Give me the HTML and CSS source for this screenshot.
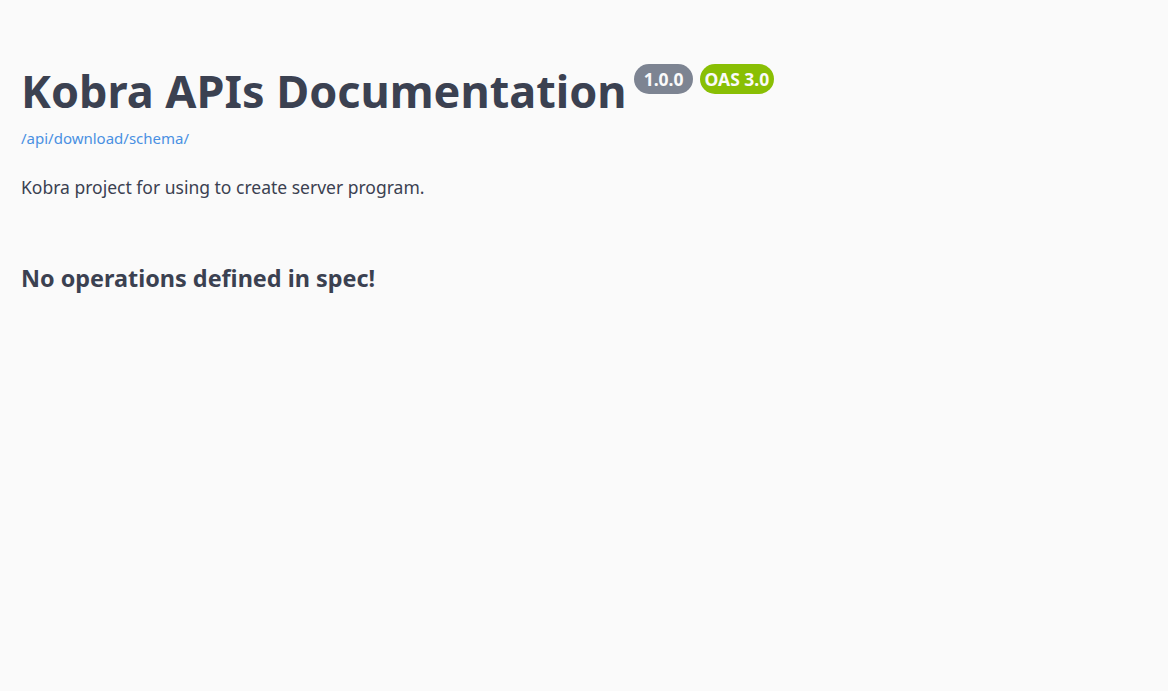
FILE: index.html
```html
<!DOCTYPE html>
<html lang="en">
<head>
<meta charset="utf-8">
<title>Kobra APIs Documentation</title>
<link rel="stylesheet" href="styles.css">
</head>
<body>
<div class="swagger-ui">
  <div class="wrapper">
    <section class="info">
      <hgroup class="main">
        <h2 class="title"><span class="title-text">Kobra APIs Documentation</span><small class="stamp version-stamp"><pre class="version"> 1.0.0 </pre></small><small class="stamp oas-stamp"><pre class="version">OAS 3.0</pre></small></h2>
        <a class="link" href="#"><span class="url">/api/download/schema/</span></a>
      </hgroup>
      <div class="description">
        <p>Kobra project for using to create server program.</p>
      </div>
    </section>
  </div>
  <div class="wrapper">
    <h3 class="empty">No operations defined in spec!</h3>
  </div>
</div>
</body>
</html>
```

FILE: styles.css
```css
html, body {
  margin: 0;
  padding: 0;
  background: #fafafa;
}
body {
  font-family: "Noto Sans", sans-serif;
  color: #3b4151;
}
.wrapper {
  box-sizing: border-box;
  max-width: 1460px;
  margin: 0 auto;
  padding: 0 21px;
}
.info {
  padding-top: 60px;
}
.main {
  margin: 0;
}
.title {
  display: flex;
  align-items: flex-start;
  margin: 0;
  font-size: 45px;
  font-weight: 700;
  line-height: normal;
  color: #3b4151;
}
.title-text {
  flex: none;
}
.stamp {
  display: inline-block;
  margin: 4px 0 0 7.5px;
  padding: 3px 5px;
  border-radius: 57px;
  background: #7d8492;
}
.oas-stamp {
  margin-left: 6.5px;
  background: #89bf04;
}
.version {
  margin: 0;
  padding: 0;
  font-family: "Noto Sans", sans-serif;
  font-size: 17.5px;
  font-weight: 700;
  line-height: normal;
  color: #fafafa;
}
.link {
  display: inline-block;
  margin-top: 7px;
  font-size: 15px;
  color: #4990e2;
  text-decoration: none;
}
.description p {
  margin: 26px 0 0;
  font-size: 17.5px;
  color: #3b4151;
}
.empty {
  margin: 63px 0 0;
  font-size: 23.4px;
  font-weight: 700;
}
```
